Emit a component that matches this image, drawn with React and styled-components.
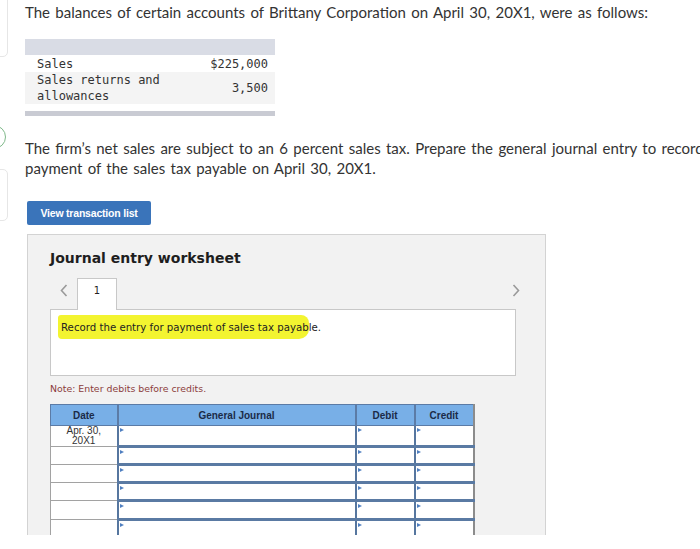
import React from "react";
import styled, { createGlobalStyle } from "styled-components";

const Global = createGlobalStyle`
  html, body { margin: 0; padding: 0; background: #fff; }
  body { font-family: "Lato", "Liberation Sans", sans-serif; }
`;

const Page = styled.div`
  width: 700px;
  height: 549px;
  overflow: hidden;
  display: flex;
  background: #fff;
`;

const Rail = styled.div`
  width: 8px;
  flex: none;
  display: flex;
  flex-direction: column;
  align-items: flex-end;
`;

const RailBox = styled.div`
  width: 30px;
  height: ${(p) => p.$h}px;
  margin-top: ${(p) => p.$top}px;
  border: 1px solid #e6e6e6;
  border-radius: 5px;
  flex: none;
`;

const RailCircle = styled.div`
  width: 22px;
  height: 22px;
  margin-top: ${(p) => p.$top}px;
  border: 1px solid #7fb98a;
  border-radius: 50%;
  margin-right: 2px;
  flex: none;
`;

const Main = styled.div`
  padding-left: 17px;
  padding-top: 2px;
  display: flex;
  flex-direction: column;
  align-items: flex-start;
  min-width: 0;
  & > * { flex: none; }
`;

const Prose = styled.p`
  margin: ${(p) => p.$mt || 0}px 0 0;
  font-family: "Lato", "Liberation Sans", sans-serif;
  font-size: 15px;
  word-spacing: 1.5px;
  line-height: 20px;
  color: #333;
  width: ${(p) => p.$w || "auto"};
  white-space: ${(p) => (p.$nowrap ? "nowrap" : "normal")};
`;

const DataTable = styled.div`
  margin-top: 17px;
  width: 250px;
  display: flex;
  flex-direction: column;
  font-family: "DejaVu Sans Mono", "Liberation Mono", monospace;
  font-size: 12px;
  line-height: 16px;
  color: #333;
  & > * { flex: none; }
`;

const Band = styled.div`
  height: ${(p) => p.$h}px;
  background: ${(p) => p.$bg};
`;

const DataRow = styled.div`
  display: flex;
  align-items: center;
  justify-content: space-between;
  padding: 0 7px 0 12px;
  background: ${(p) => (p.$alt ? "#f4f4f4" : "#fff")};
  min-height: ${(p) => p.$h || 16}px;
`;

const Label = styled.span`
  width: 140px;
`;

const Amount = styled.span`
  text-align: right;
`;

const Button = styled.button`
  margin: 23px 0 0 2px;
  width: 124px;
  height: 24px;
  border: none;
  border-radius: 2px;
  background: #3a74ba;
  color: #fff;
  font-family: "Liberation Sans", Arial, sans-serif;
  font-weight: bold;
  font-size: 10.5px;
  letter-spacing: -0.2px;
  padding: 0;
`;

const PanelClip = styled.div`
  margin: 9px 0 0 2px;
  width: 519px;
  height: 301px;
  overflow: hidden;
  background: #f2f2f2;
  border: 1px solid #d3d3d3;
  border-bottom: none;
  box-sizing: border-box;
  padding: 13px 0 0 22px;
  display: flex;
  flex-direction: column;
  align-items: flex-start;
  & > * { flex: none; }
`;

const Title = styled.h2`
  margin: 0;
  font-family: "DejaVu Sans", Verdana, sans-serif;
  font-weight: bold;
  font-size: 14px;
  line-height: 20px;
  color: #1e1e1e;
`;

const TabRow = styled.div`
  margin-top: 10px;
  width: 472px;
  height: 32px;
  display: flex;
  align-items: flex-start;
  position: relative;
  z-index: 1;
`;

const Chevron = styled.span`
  width: ${(p) => p.$w}px;
  height: 24px;
  display: flex;
  align-items: center;
  justify-content: center;
  color: #9a9a9a;
`;

const Tab = styled.div`
  width: 40px;
  height: 32px;
  box-sizing: border-box;
  background: #fff;
  border: 1px solid #c8c8c8;
  border-bottom: none;
  display: flex;
  justify-content: center;
  padding-top: 6px;
  font-family: "DejaVu Sans", Verdana, sans-serif;
  font-size: 10px;
  color: #222;
`;

const Spacer = styled.div`
  flex: 1;
`;

const PromptBox = styled.div`
  margin-top: -1px;
  width: 466px;
  height: 67px;
  box-sizing: border-box;
  background: #fff;
  border: 1px solid #c8c8c8;
  padding: 8px 0 0 10px;
  font-family: "DejaVu Sans", Verdana, sans-serif;
  font-size: 10.2px;
  color: #222;
  line-height: 20px;
`;

const Mark = styled.span`
  background: #f3f430;
  padding: 7px 0 6px 3px;
  margin-left: -3px;
  border-radius: 3px 8px 10px 4px;
`;

const Note = styled.div`
  margin-top: 7px;
  font-family: "DejaVu Sans", Verdana, sans-serif;
  font-size: 9.4px;
  color: #8c3c3c;
  line-height: 12px;
`;

const JTable = styled.table`
  margin-top: 9px;
  border-collapse: collapse;
  table-layout: fixed;
  width: 423px;
  font-family: "Liberation Sans", Arial, sans-serif;
`;

const Th = styled.th`
  height: 20px;
  padding: 0;
  background: #78afe7;
  color: #1b2b48;
  font-size: 10px;
  font-weight: bold;
  border: 1px solid #5b7ba6;
  border-left-width: ${(p) => (p.$first ? 1 : 2)}px;
  border-right-width: ${(p) => (p.$last ? 2 : 1)}px;
  border-right-color: ${(p) => (p.$last ? "#8c8c8c" : "#5b7ba6")};
`;

const DateTd = styled.td`
  height: ${(p) => p.$h}px;
  padding: 0;
  background: #fff;
  border: 1px solid #a2a2a2;
  border-top: none;
  text-align: center;
  vertical-align: top;
  font-size: 10px;
  line-height: 10px;
  color: #333;
`;

const InputTd = styled.td`
  height: ${(p) => p.$h}px;
  padding: 0;
  position: relative;
  background: #fff;
  border-left: 2px solid #56769f;
  border-right: ${(p) => (p.$last ? "2px solid #8c8c8c" : "none")};
  border-bottom: 3px solid #5a7aa3;
  &::before {
    content: "";
    position: absolute;
    left: 1px;
    top: 2px;
    border-left: 4px solid #4f7fc0;
    border-top: 2.5px solid transparent;
    border-bottom: 2.5px solid transparent;
  }
`;

const rows = [
  { h: 19, date: ["Apr. 30,", "20X1"] },
  { h: 15 },
  { h: 15 },
  { h: 15 },
  { h: 16 },
  { h: 16 },
];

export default function App() {
  return (
    <>
      <Global />
      <Page>
        <Rail>
          <RailBox $top={-5} $h={60} />
          <RailCircle $top={68} />
          <RailBox $top={20} $h={50} />
        </Rail>
        <Main>
          <Prose $nowrap>
            The balances of certain accounts of Brittany Corporation on April 30, 20X1, were as follows:
          </Prose>
          <DataTable>
            <Band $h={16} $bg="#d9dce5" />
            <DataRow $h={17}>
              <Label>Sales</Label>
              <Amount>$225,000</Amount>
            </DataRow>
            <DataRow $alt $h={31}>
              <Label>Sales returns and allowances</Label>
              <Amount>3,500</Amount>
            </DataRow>
            <Band $h={7} $bg="#fff" />
            <Band $h={5} $bg="#c9cbd3" />
          </DataTable>
          <Prose $mt={22} $w="720px">
            The firm’s net sales are subject to an 6 percent sales tax. Prepare the general journal entry to record payment of the sales tax payable on April 30, 20X1.
          </Prose>
          <Button>View transaction list</Button>
          <PanelClip>
            <Title>Journal entry worksheet</Title>
            <TabRow>
              <Chevron $w={27}>
                <svg width="8" height="13" viewBox="0 0 8 13">
                  <path d="M6.5 1 L1.5 6.5 L6.5 12" fill="none" stroke="#9a9a9a" strokeWidth="1.6" />
                </svg>
              </Chevron>
              <Tab>1</Tab>
              <Spacer />
              <Chevron $w={12}>
                <svg width="8" height="13" viewBox="0 0 8 13">
                  <path d="M1.5 1 L6.5 6.5 L1.5 12" fill="none" stroke="#9a9a9a" strokeWidth="1.6" />
                </svg>
              </Chevron>
            </TabRow>
            <PromptBox>
              <Mark>Record the entry for payment of sales tax payab</Mark>le.
            </PromptBox>
            <Note>Note: Enter debits before credits.</Note>
            <JTable>
              <colgroup>
                <col style={{ width: 67 }} />
                <col style={{ width: 238 }} />
                <col style={{ width: 59 }} />
                <col style={{ width: 59 }} />
              </colgroup>
              <thead>
                <tr>
                  <Th $first>Date</Th>
                  <Th>General Journal</Th>
                  <Th>Debit</Th>
                  <Th $last>Credit</Th>
                </tr>
              </thead>
              <tbody>
                {rows.map((r, i) => (
                  <tr key={i}>
                    <DateTd $h={r.h}>
                      {r.date ? (
                        <>
                          {r.date[0]}
                          <br />
                          {r.date[1]}
                        </>
                      ) : null}
                    </DateTd>
                    <InputTd $h={r.h} />
                    <InputTd $h={r.h} />
                    <InputTd $h={r.h} $last />
                  </tr>
                ))}
              </tbody>
            </JTable>
          </PanelClip>
        </Main>
      </Page>
    </>
  );
}
